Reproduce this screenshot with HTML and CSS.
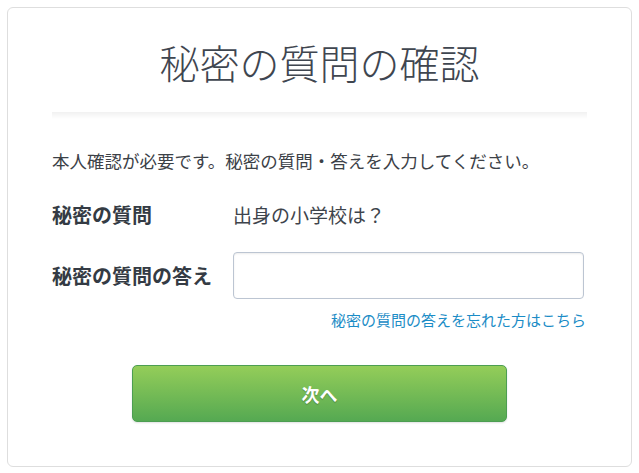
FILE: index.html
```html
<!DOCTYPE html>
<html lang="ja">
<head>
    <meta charset="UTF-8">
    <meta name="viewport" content="width=device-width, initial-scale=1.0">
    <title>秘密の質問の確認</title>
    <link rel="stylesheet" href="styles.css">
</head>
<body>
    <!--card holding the whole confirmation form-->
    <div class="card">
        <h1 class="card-title">秘密の質問の確認</h1>
        <div class="divider"></div>

        <p class="lead">本人確認が必要です。秘密の質問・答えを入力してください。</p>

        <!--question and answer rows-->
        <div class="form-row question-row">
            <div class="form-label">秘密の質問</div>
            <div class="form-value">出身の小学校は？</div>
        </div>
        <div class="form-row">
            <label class="form-label" for="answer">秘密の質問の答え</label>
            <input type="text" id="answer" class="form-input">
        </div>
        <div class="forgot">
            <a href="#">秘密の質問の答えを忘れた方はこちら</a>
        </div>

        <div class="actions">
            <button class="next-button">次へ</button>
        </div>
    </div>
</body>
</html>
```

FILE: styles.css
```css
/*page and card layout*/
body {
    margin: 0;
    padding: 7px;
    background-color: #ffffff;
    font-family: "Noto Sans CJK JP", "Noto Sans", sans-serif;
    color: #3e444c;
}

.card {
    border: 1px solid #dedede;
    border-radius: 6px;
    padding: 30px 44px 43px;
    height: 460px;
    box-sizing: border-box;
}

.card-title {
    margin: 0;
    font-size: 40px;
    font-weight: 300;
    line-height: 48px;
    text-align: center;
    color: #3f4650;
}

.divider {
    height: 7px;
    margin-top: 26px;
    background: linear-gradient(#f1f1f1, rgba(255, 255, 255, 0));
}

.lead {
    margin: 29px 0 0;
    font-size: 17.5px;
    line-height: 26px;
    color: #3c4147;
}

/*form rows*/
.form-row {
    display: flex;
    align-items: center;
    margin-top: 22px;
}

.question-row {
    margin-top: 26px;
}

.form-label {
    width: 181px;
    flex-shrink: 0;
    font-size: 20px;
    font-weight: bold;
    line-height: 30px;
    color: #343b44;
}

.form-value {
    font-size: 19px;
    line-height: 30px;
    color: #3e444c;
}

.form-input {
    width: 351px;
    height: 47px;
    box-sizing: border-box;
    border: 1px solid #bcc5d2;
    border-radius: 4px;
    box-shadow: inset 0 1px 2px rgba(0, 0, 0, 0.08);
    padding: 0 12px;
    font-size: 16px;
}

.forgot {
    margin-top: 11px;
    text-align: right;
    font-size: 15px;
    line-height: 20px;
    padding-right: 1px;
}

.forgot a {
    color: #1b8cc6;
    text-decoration: none;
}

/*submit button*/
.actions {
    display: flex;
    justify-content: center;
    margin-top: 35px;
}

.next-button {
    width: 375px;
    height: 57px;
    border: 1px solid #4c9e52;
    border-radius: 5px;
    background: linear-gradient(#94cd59, #55a952);
    box-shadow: 0 1px 2px rgba(0, 0, 0, 0.12);
    color: #ffffff;
    font-family: inherit;
    font-size: 18px;
    font-weight: bold;
    text-shadow: 0 1px 1px rgba(0, 0, 0, 0.25);
    cursor: pointer;
}
```
